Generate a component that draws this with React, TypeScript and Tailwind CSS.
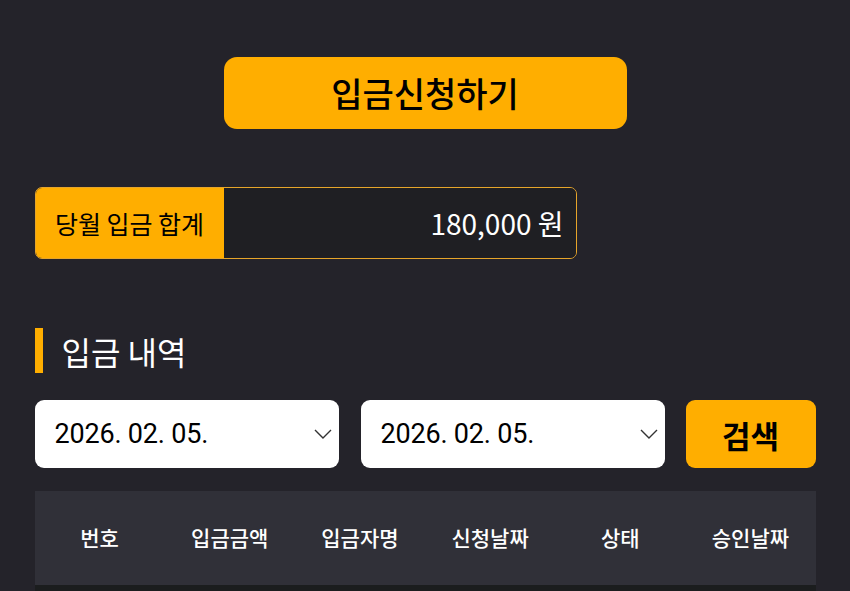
const columns = ["번호", "입금금액", "입금자명", "신청날짜", "상태", "승인날짜"];

function DateSelect({value}: {value: string}) {
    return (
        <div className="flex h-[68px] w-[304px] items-center justify-between rounded-[9px] bg-white pl-[20px] pr-[7px]">
            <span className="font-['Roboto'] text-[27px] leading-none tracking-[-0.2px] text-black">{value}</span>
            <svg width="18" height="10" viewBox="0 0 18 10" fill="none">
                <path d="M1 1L9 9L17 1" stroke="#333" strokeWidth="1.4"/>
            </svg>
        </div>
    );
}

export default function App() {
    return (
        <div
            className="min-h-[591px] w-full bg-[#24232a] pt-[57px]"
            style={{fontFamily: '"Noto Sans CJK KR", "Noto Sans", sans-serif'}}
        >
            <div className="mx-auto flex w-[781px] flex-col">
                <div className="flex justify-center">
                    <button className="flex h-[72px] w-[403px] items-center justify-center rounded-[13px] bg-[#ffae00] text-[34px] font-medium leading-none text-black">
                        입금신청하기
                    </button>
                </div>

                <div className="mt-[58px] flex h-[72px] w-[542px] overflow-hidden rounded-[7px] border border-[#e6a52a]">
                    <div className="flex w-[188px] items-center justify-center bg-[#ffae00] text-[25px] leading-none text-black">
                        당월 입금 합계
                    </div>
                    <div className="flex flex-1 items-center justify-end bg-[#1f1f23] pr-[12px] text-[28px] leading-none text-white">
                        180,000 원
                    </div>
                </div>

                <div className="mt-[69px] flex h-[45px] items-center gap-[19px]">
                    <div className="h-[45px] w-[8px] bg-[#ffae00]"/>
                    <h2 className="text-[32px] font-normal leading-none text-white">입금 내역</h2>
                </div>

                <div className="mt-[27px] flex items-center">
                    <DateSelect value="2026. 02. 05."/>
                    <div className="ml-[22px]">
                        <DateSelect value="2026. 02. 05."/>
                    </div>
                    <button className="ml-[21px] flex h-[68px] w-[130px] items-center justify-center rounded-[9px] bg-[#ffae00] text-[31px] font-semibold leading-none text-black">
                        검색
                    </button>
                </div>

                <div className="mt-[23px] grid h-[94px] grid-cols-6 items-center bg-[#303038]">
                    {columns.map((col) => (
                        <div key={col} className="text-center text-[21px] font-medium text-white">
                            {col}
                        </div>
                    ))}
                </div>
                <div className="h-[20px] bg-[#1b1d1e]"/>
            </div>
        </div>
    );
}
